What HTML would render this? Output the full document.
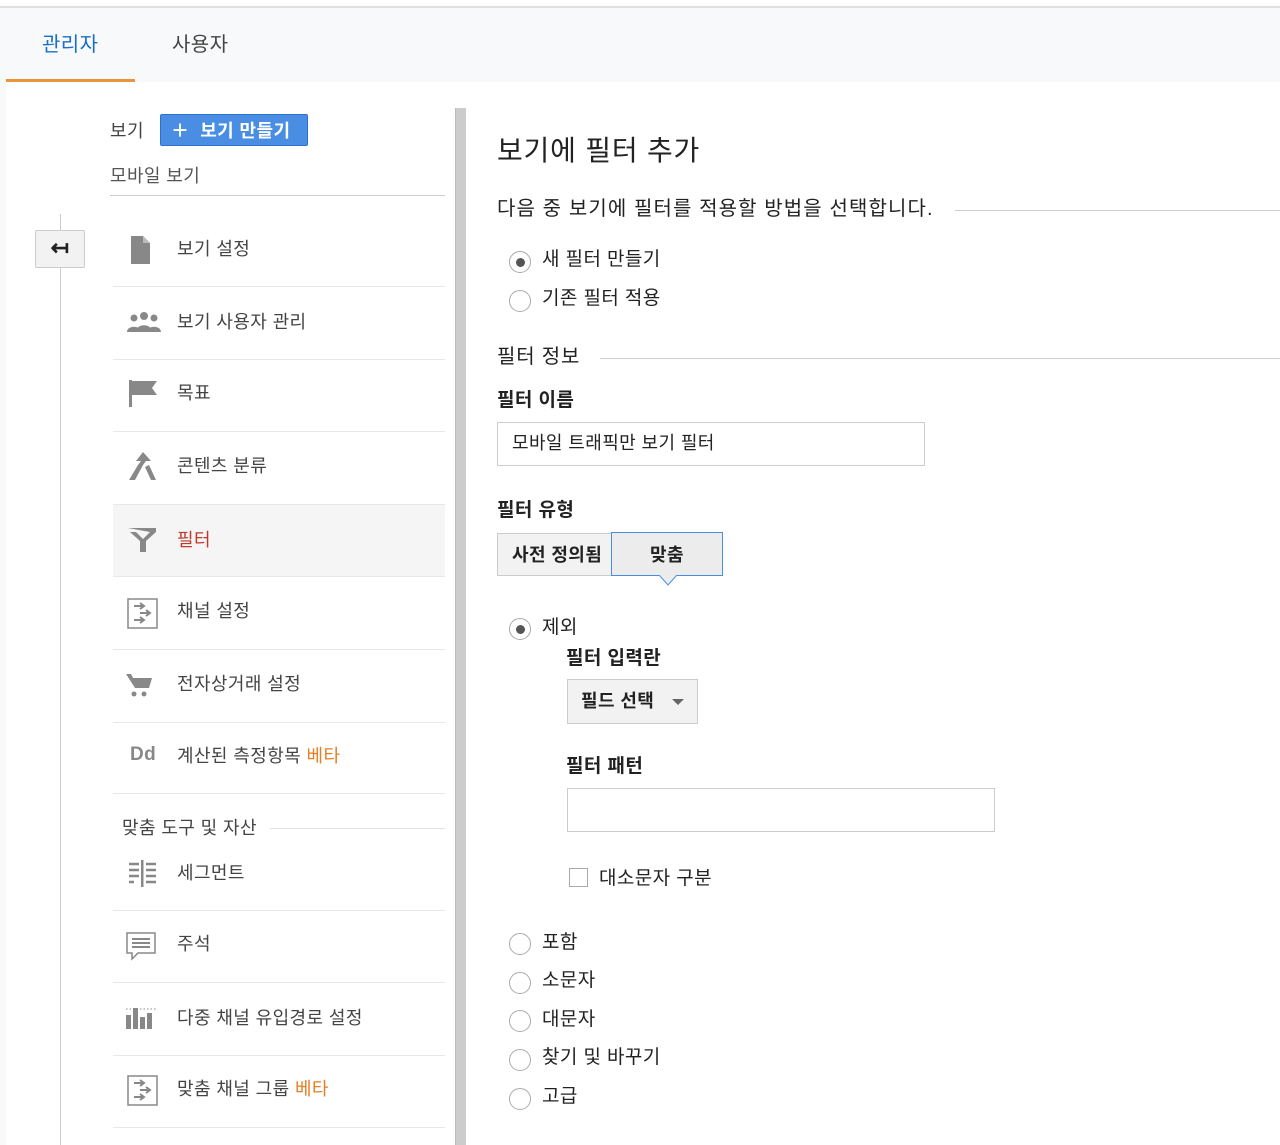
<!DOCTYPE html>
<html><head><meta charset="utf-8"><style>
*{margin:0;padding:0;box-sizing:border-box}
body{width:1280px;height:1145px;background:#fff;font-family:"Liberation Sans","Noto Sans CJK KR",sans-serif;position:relative;overflow:hidden;color:#222;letter-spacing:0.4px}
.a{position:absolute;white-space:nowrap}
.sep{position:absolute;left:113px;width:332px;height:1px;background:#e8e8e8}
.mi{position:absolute;left:177px;font-size:18px;color:#444;margin-top:-2px}
.ic{position:absolute;left:126px}
.radio{position:absolute;width:22px;height:22px;border:1px solid #aaa;border-radius:50%;background:#fff}
.radio.on::after{content:"";position:absolute;left:6px;top:6px;width:9px;height:9px;border-radius:50%;background:#555}
.rl{position:absolute;font-size:19px;color:#222;margin-top:-2px}
.hd{position:absolute;font-size:19px;font-weight:bold;color:#222;margin-top:-2px}
</style></head><body>
<div class="a" style="left:0;top:6px;width:1280px;height:2px;background:#e0e0e0"></div>
<div class="a" style="left:0;top:8px;width:1280px;height:74px;background:#f8f9fa"></div>
<div class="a" style="left:0;top:8px;width:6px;height:1137px;background:#f8f9fa"></div>
<div class="a" style="left:42px;top:28px;font-size:20px;color:#1a6fc4">관리자</div>
<div class="a" style="left:172px;top:28px;font-size:20px;color:#444">사용자</div>
<div class="a" style="left:6px;top:79px;width:129px;height:3px;background:#e8943a"></div>
<div class="a" style="left:455px;top:108px;width:11px;height:1037px;background:#ccc;border-left:1px solid #bbb"></div>

<div class="a" style="left:110px;top:117px;font-size:18px;color:#444">보기</div>
<div class="a" style="left:160px;top:114px;width:148px;height:32px;background:#4a8ee4;border:1px solid #2e6fd0;border-radius:2px;color:#fff;font-size:18px;font-weight:bold;padding:2px 0 0 10px">＋&nbsp; 보기 만들기</div>
<div class="a" style="left:110px;top:162px;font-size:18px;color:#555">모바일 보기</div>
<div class="a" style="left:110px;top:195px;width:335px;height:1px;background:#ccc"></div>
<div class="a" style="left:60px;top:214px;width:1px;height:931px;background:#ccc"></div>
<div class="a" style="left:35px;top:230px;width:50px;height:38px;background:#f2f2f2;border:1px solid #ccc;border-radius:2px;font-size:22px;font-weight:bold;text-align:center;line-height:34px">↤</div>

<svg class="ic" style="top:235px" width="30" height="30"><path d="M5 1h12l7 7v21H5z" fill="#888"/><path d="M17 1v7h7" fill="#bbb"/></svg>
<div class="mi" style="top:237px">보기 설정</div>
<div class="sep" style="top:286px"></div>
<svg class="ic" style="top:310px" width="36" height="26"><circle cx="8" cy="8" r="3.5" fill="#888"/><circle cx="18" cy="6" r="4" fill="#888"/><circle cx="28" cy="8" r="3.5" fill="#888"/><path d="M1 22c0-7 14-7 14 0zM10 22c0-9 16-9 16 0zM21 22c0-7 14-7 14 0z" fill="#888"/></svg>
<div class="mi" style="top:310px">보기 사용자 관리</div>
<div class="sep" style="top:359px"></div>
<svg class="ic" style="top:378px" width="34" height="30"><rect x="3" y="2" width="3" height="27" fill="#888"/><path d="M6 3h25l-5 7 5 7H6z" fill="#888"/></svg>
<div class="mi" style="top:381px">목표</div>
<div class="sep" style="top:431px"></div>
<svg class="ic" style="top:450px" width="34" height="34"><path d="M17 2l8 9h-5l-3 4-8 15H3l9-15 3-4h-5z M19 17l6 13h5l-7-15z" fill="#888"/></svg>
<div class="mi" style="top:454px">콘텐츠 분류</div>
<div class="a" style="left:113px;top:504px;width:332px;height:72px;background:#f5f5f5"></div>
<div class="sep" style="top:504px"></div>
<svg class="ic" style="top:526px" width="34" height="28"><path d="M2 2h28v4l-10 9v11h-6V15L4 6h6l7 7 7-7z" fill="#888"/></svg>
<div class="mi" style="top:528px;color:#c0392b">필터</div>
<div class="sep" style="top:576px"></div>
<svg class="ic" style="top:598px" width="34" height="32"><rect x="2" y="1" width="29" height="29" fill="none" stroke="#888" stroke-width="1.5"/><path d="M8 8h10M14 5l4 3-4 3M14 15h10M20 12l4 3-4 3M8 22h10M14 19l4 3-4 3" stroke="#888" stroke-width="2" fill="none"/></svg>
<div class="mi" style="top:599px">채널 설정</div>
<div class="sep" style="top:649px"></div>
<svg class="ic" style="top:672px" width="30" height="26"><path d="M0 2h5l2 4h19l-3 10H9z" fill="#888"/><circle cx="8" cy="22" r="2.5" fill="#888"/><circle cx="18" cy="22" r="2.5" fill="#888"/></svg>
<div class="mi" style="top:672px">전자상거래 설정</div>
<div class="sep" style="top:722px"></div>
<div class="a" style="left:130px;top:744px;font-size:19px;font-weight:bold;color:#888">Dd</div>
<div class="mi" style="top:744px">계산된 측정항목 <span style="color:#e67e22">베타</span></div>
<div class="sep" style="top:793px"></div>
<div class="a" style="left:122px;top:814px;font-size:18px;color:#444">맞춤 도구 및 자산</div>
<div class="a" style="left:270px;top:828px;width:175px;height:1px;background:#e0e0e0"></div>
<svg class="ic" style="top:860px" width="36" height="28"><path d="M3 4h10M3 10h10M3 16h10M3 22h5M20 4h10M20 10h10M20 16h10M20 22h10" stroke="#888" stroke-width="2.5"/><rect x="15" y="0" width="2.5" height="27" fill="#888"/></svg>
<div class="mi" style="top:861px">세그먼트</div>
<div class="sep" style="top:910px"></div>
<svg class="ic" style="top:932px" width="32" height="30"><path d="M1 1h28v20H12l-6 6v-6H1z" fill="none" stroke="#888" stroke-width="1.5"/><path d="M6 7h18M6 11h18M6 15h18" stroke="#888" stroke-width="2"/></svg>
<div class="mi" style="top:932px">주석</div>
<div class="sep" style="top:982px"></div>
<svg class="ic" style="top:1005px" width="32" height="26"><rect x="0" y="10" width="5" height="14" fill="#888"/><rect x="7" y="3" width="5" height="21" fill="#888"/><rect x="14" y="12" width="5" height="12" fill="#888"/><rect x="21" y="8" width="5" height="16" fill="#888"/><path d="M0 4h30" stroke="#888" stroke-dasharray="1.5 2"/></svg>
<div class="mi" style="top:1006px">다중 채널 유입경로 설정</div>
<div class="sep" style="top:1055px"></div>
<svg class="ic" style="top:1075px" width="34" height="32"><rect x="2" y="1" width="29" height="29" fill="none" stroke="#888" stroke-width="1.5"/><path d="M8 8h10M14 5l4 3-4 3M14 15h10M20 12l4 3-4 3M8 22h10M14 19l4 3-4 3" stroke="#888" stroke-width="2" fill="none"/></svg>
<div class="mi" style="top:1077px">맞춤 채널 그룹 <span style="color:#e67e22">베타</span></div>
<div class="sep" style="top:1127px"></div>

<div class="a" style="left:497px;top:129px;font-size:28px;color:#222;letter-spacing:0.8px">보기에 필터 추가</div>
<div class="a" style="left:497px;top:192px;font-size:20px;color:#222;letter-spacing:1.1px">다음 중 보기에 필터를 적용할 방법을 선택합니다.</div>
<div class="a" style="left:955px;top:210px;width:325px;height:1px;background:#ccc"></div>
<div class="radio on" style="left:509px;top:251px"></div><div class="rl" style="left:542px;top:246px">새 필터 만들기</div>
<div class="radio" style="left:509px;top:290px"></div><div class="rl" style="left:542px;top:285px">기존 필터 적용</div>
<div class="a" style="left:497px;top:340px;font-size:20px;color:#222;letter-spacing:0.8px">필터 정보</div>
<div class="a" style="left:600px;top:358px;width:680px;height:1px;background:#ccc"></div>
<div class="hd" style="left:497px;top:387px">필터 이름</div>
<div class="a" style="left:497px;top:422px;width:428px;height:44px;border:1px solid #ccc;font-size:18px;padding:6px 0 0 14px">모바일 트래픽만 보기 필터</div>
<div class="hd" style="left:497px;top:497px">필터 유형</div>
<div class="a" style="left:497px;top:533px;width:115px;height:43px;background:#f2f2f2;border:1px solid #ccc;font-size:18px;font-weight:bold;padding:7px 0 0 14px">사전 정의됨</div>
<div class="a" style="left:611px;top:532px;width:112px;height:44px;background:#ececec;border:1px solid #4a8ee4;font-size:18px;font-weight:bold;text-align:center;padding-top:8px">맞춤</div>
<svg class="a" style="left:659px;top:575px" width="18" height="11"><path d="M0 0l9 10 9-10" fill="#ececec" stroke="#4a8ee4"/></svg>
<div class="radio on" style="left:509px;top:618px"></div><div class="rl" style="left:542px;top:614px">제외</div>
<div class="hd" style="left:566px;top:645px">필터 입력란</div>
<div class="a" style="left:567px;top:679px;width:131px;height:45px;background:#f2f2f2;border:1px solid #ccc;font-size:18px;font-weight:bold;padding:7px 0 0 13px">필드 선택</div>
<svg class="a" style="left:672px;top:699px" width="12" height="7"><path d="M0 0h12L6 6z" fill="#666"/></svg>
<div class="hd" style="left:566px;top:753px">필터 패턴</div>
<div class="a" style="left:567px;top:788px;width:428px;height:44px;border:1px solid #ccc"></div>
<div class="a" style="left:569px;top:868px;width:19px;height:19px;border:1px solid #aaa;background:#fff"></div>
<div class="rl" style="left:599px;top:865px">대소문자 구분</div>
<div class="radio" style="left:509px;top:933px"></div><div class="rl" style="left:542px;top:929px">포함</div>
<div class="radio" style="left:509px;top:972px"></div><div class="rl" style="left:542px;top:967px">소문자</div>
<div class="radio" style="left:509px;top:1010px"></div><div class="rl" style="left:542px;top:1006px">대문자</div>
<div class="radio" style="left:509px;top:1049px"></div><div class="rl" style="left:542px;top:1044px">찾기 및 바꾸기</div>
<div class="radio" style="left:509px;top:1088px"></div><div class="rl" style="left:542px;top:1083px">고급</div>
</body></html>
